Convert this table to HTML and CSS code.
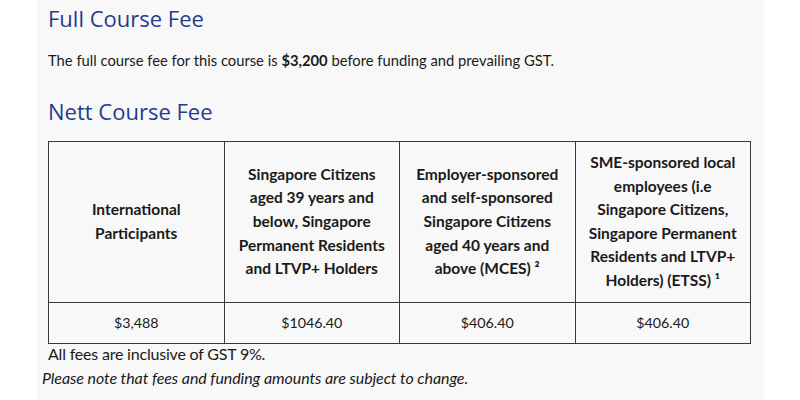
FILE: index.html
```html
<!DOCTYPE html>
<html>
<head>
<meta charset="utf-8">
<link rel="stylesheet" href="styles.css">
</head>
<body>
<div class="panel">
  <h2 class="title title-first">Full Course Fee</h2>
  <p class="lead">The full course fee for this course is <strong>$3,200</strong> before funding and prevailing GST.</p>
  <h2 class="title title-second">Nett Course Fee</h2>
  <table class="fees">
    <thead>
      <tr>
        <th>International Participants</th>
        <th>Singapore Citizens aged 39 years and below, Singapore Permanent Residents and LTVP+ Holders</th>
        <th>Employer-sponsored and self-sponsored Singapore Citizens aged 40 years and above (MCES) ²</th>
        <th>SME-sponsored local employees (i.e Singapore Citizens, Singapore Permanent Residents and LTVP+ Holders) (ETSS) ¹</th>
      </tr>
    </thead>
    <tbody>
      <tr>
        <td>$3,488</td>
        <td>$1046.40</td>
        <td>$406.40</td>
        <td>$406.40</td>
      </tr>
    </tbody>
  </table>
  <p class="gst">All fees are inclusive of GST 9%.</p>
  <p class="note">Please note that fees and funding amounts are subject to change.</p>
</div>
</body>
</html>
```

FILE: styles.css
```css
html, body {
  margin: 0;
  padding: 0;
  background: #ffffff;
}

.panel {
  margin-left: 37px;
  width: 727px;
  min-height: 400px;
  box-sizing: border-box;
  padding: 0 13px 0 11px;
  background: #f8f8f8;
  font-family: "Lato", sans-serif;
  font-size: 14.75px;
  color: #1a1a1a;
}

.title {
  margin: 0;
  font-family: "Open Sans", sans-serif;
  font-weight: 400;
  font-size: 22px;
  line-height: 28px;
  color: #253b8c;
}

.title-first {
  padding-top: 4px;
}

.lead {
  margin: 16px 0 0;
  line-height: 24px;
}

.lead strong {
  font-weight: 700;
}

.title-second {
  margin-top: 25px;
}

.fees {
  margin-top: 16px;
  width: 703px;
  border-collapse: collapse;
  table-layout: fixed;
}

.fees th,
.fees td {
  border: 1px solid #3a3a3a;
  text-align: center;
  vertical-align: middle;
}

.fees th {
  height: 141px;
  padding: 9px 12px;
  font-size: 15.5px;
  font-weight: 700;
  line-height: 23.6px;
}

.fees td {
  height: 24px;
  padding: 8px 12px;
  font-size: 14.25px;
  line-height: 24px;
  font-weight: 400;
}

.gst {
  margin: -2px 0 0;
  font-size: 16px;
  letter-spacing: -0.2px;
  line-height: 24px;
}

.note {
  margin: 0 0 0 -6px;
  font-size: 16px;
  letter-spacing: -0.08px;
  line-height: 24px;
  font-style: italic;
}
```
